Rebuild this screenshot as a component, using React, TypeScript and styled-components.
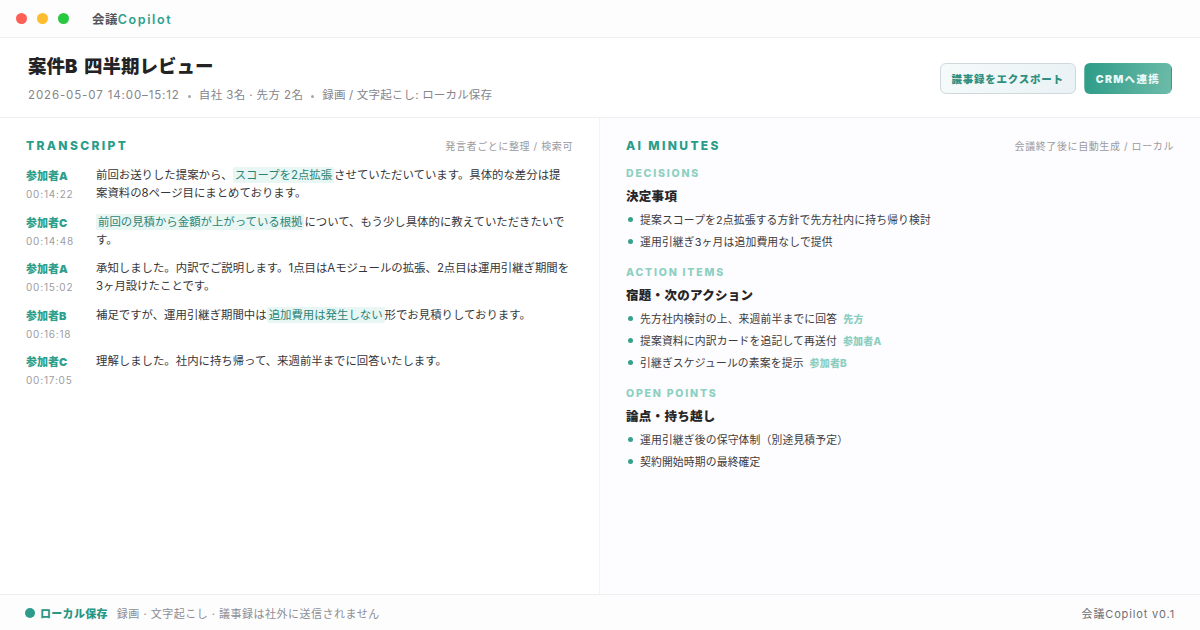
import React from 'react';
import styled, { createGlobalStyle } from 'styled-components';

const GlobalStyle = createGlobalStyle`
  html, body {
    margin: 0;
    padding: 0;
    background: #fff;
  }
  body {
    font-family: Inter, "Noto Sans CJK JP", sans-serif;
    color: #2a2a2e;
  }
  * { box-sizing: border-box; }
`;

const Page = styled.div`
  width: 1200px;
  height: 630px;
  display: flex;
  flex-direction: column;
  overflow: hidden;
  background: #fff;
`;

const TitleBar = styled.div`
  height: 38px;
  flex: none;
  display: flex;
  align-items: center;
  padding: 0 16px;
  background: #fdfdfe;
  border-bottom: 1px solid #f0f0f2;
`;

const Light = styled.span<{ $color: string }>`
  width: 11px;
  height: 11px;
  border-radius: 50%;
  margin-right: 10px;
  background: ${({ $color }) => $color};
`;

const Brand = styled.div`
  margin-left: 13px;
  font-size: 12.5px;
  font-weight: 600;
  color: #55555b;
  letter-spacing: 0.4px;
  span { color: #2fa08e; letter-spacing: 1.6px; }
`;

const Header = styled.header`
  height: 80px;
  flex: none;
  display: flex;
  align-items: center;
  justify-content: space-between;
  padding: 0 28px;
  border-bottom: 1px solid #eeeef0;
`;

const Title = styled.h1`
  margin: 0 0 7px;
  font-size: 18.5px;
  line-height: 28px;
  font-weight: 900;
  color: #232326;
  word-spacing: 3px;
`;

const Meta = styled.div`
  display: flex;
  align-items: center;
  font-size: 11.5px;
  line-height: 16px;
  color: #85858b;
  letter-spacing: 0.4px;
`;

const MetaDate = styled.span`
  letter-spacing: 0.88px;
`;

const MetaTail = styled.span`
  letter-spacing: 0.18px;
`;

const MetaDot = styled.span`
  width: 3px;
  height: 3px;
  margin: 2px 8px 0 8px;
  border-radius: 50%;
  background: #a5a5aa;
`;

const Actions = styled.div`
  display: flex;
  gap: 8px;
  margin-top: 1px;
`;

const Button = styled.div<{ $primary?: boolean }>`
  height: 31px;
  padding: 0 11px;
  display: flex;
  align-items: center;
  border-radius: 6px;
  font-size: 10.5px;
  font-weight: 900;
  letter-spacing: ${({ $primary }) => ($primary ? '1.3px' : '0.75px')};
  color: ${({ $primary }) => ($primary ? '#e9f6f3' : '#2f8f80')};
  background: ${({ $primary }) =>
    $primary ? 'linear-gradient(100deg, #2d9c88, #6dbba9)' : 'linear-gradient(100deg, #f5fafa, #eaf2f5)'};
  border: 1px solid ${({ $primary }) => ($primary ? 'transparent' : '#cfd9dc')};
`;

const Body = styled.main`
  flex: 1;
  min-height: 0;
  display: grid;
  grid-template-columns: 600px 600px;
`;

const Column = styled.section<{ $right?: boolean }>`
  padding: ${({ $right }) => ($right ? '18px 26px 0 26px' : '18px 27px 0 26px')};
  background: ${({ $right }) => ($right ? '#fdfcfe' : '#fff')};
  margin-left: ${({ $right }) => ($right ? '-1px' : '0')};
  border-left: ${({ $right }) => ($right ? '1px solid #f3f3f5' : 'none')};
`;

const ColumnHead = styled.div`
  display: flex;
  align-items: center;
  justify-content: space-between;
  height: 18px;
`;

const ColumnTitle = styled.h2`
  margin: 0;
  font-size: 12px;
  font-weight: 800;
  letter-spacing: 2.35px;
  color: #2a9c8a;
`;

const ColumnNote = styled.div`
  font-size: 10px;
  color: #9b9ba0;
  letter-spacing: 0.6px;
`;

const Entries = styled.div`
  display: flex;
  flex-direction: column;
  gap: 9.7px;
  margin-top: 12px;
`;

const Entry = styled.article`
  display: grid;
  grid-template-columns: 70px 1fr;
  min-height: 36.8px;
`;

const Speaker = styled.div`
  padding-top: 2px;
`;

const SpeakerName = styled.div`
  font-size: 11px;
  line-height: 16px;
  font-weight: 900;
  color: #2f9f8c;
`;

const Time = styled.div`
  margin-top: 3px;
  font-size: 10px;
  line-height: 14px;
  color: #9d9da2;
  letter-spacing: 0.8px;
`;

const Speech = styled.p`
  margin: 0;
  padding-right: 3px;
  font-size: 11.4px;
  line-height: 18.4px;
  color: #36363a;
`;

const Mark = styled.span`
  padding: 1px 2px;
  border-radius: 2px;
  background: #e8f6f4;
  color: #2b8577;
`;

const GroupLabel = styled.div<{ $first?: boolean }>`
  margin-top: ${({ $first }) => ($first ? '12px' : '13px')};
  font-size: 10.5px;
  line-height: 16px;
  font-weight: 800;
  letter-spacing: 1.8px;
  color: #8bd0c1;
`;

const GroupTitle = styled.h3`
  margin: 6px 0 2px;
  font-size: 12.5px;
  line-height: 18px;
  font-weight: 900;
  color: #262629;
  letter-spacing: 0.3px;
`;

const Items = styled.ul`
  list-style: none;
  margin: 0;
  padding: 0;
`;

const Item = styled.li`
  display: flex;
  align-items: center;
  height: 22px;
  font-size: 10.8px;
  color: #3b3b40;
  letter-spacing: 0.16px;
  &::before {
    content: '';
    width: 5px;
    height: 5px;
    margin: 1px 7px 0 2px;
    border-radius: 50%;
    background: #37a08f;
    flex: none;
  }
`;

const Owner = styled.span`
  margin-left: 6px;
  font-size: 10px;
  font-weight: 800;
  color: #8ccfc1;
`;

const Footer = styled.footer`
  height: 36px;
  flex: none;
  display: flex;
  align-items: center;
  padding: 0 25px;
  background: #fdfdfe;
  border-top: 1px solid #eeeef0;
  font-size: 11px;
  color: #8d8d93;
  letter-spacing: 0.5px;
`;

const StatusDot = styled.span`
  width: 10px;
  height: 10px;
  border-radius: 50%;
  background: #2f9c8b;
  margin-right: 5px;
`;

const Status = styled.span`
  font-weight: 900;
  color: #2b9684;
  margin-right: 9px;
  letter-spacing: 0.3px;
`;

const Version = styled.span`
  margin-left: auto;
  color: #6f6f75;
  letter-spacing: 0.85px;
`;

const transcript = [
  {
    name: '参加者A',
    time: '00:14:22',
    text: (
      <>
        前回お送りした提案から、<Mark>スコープを2点拡張</Mark>させていただいています。具体的な差分は提案資料の8ページ目にまとめております。
      </>
    ),
  },
  {
    name: '参加者C',
    time: '00:14:48',
    text: (
      <>
        <Mark>前回の見積から金額が上がっている根拠</Mark>について、もう少し具体的に教えていただきたいです。
      </>
    ),
  },
  {
    name: '参加者A',
    time: '00:15:02',
    text: <>承知しました。内訳でご説明します。1点目はAモジュールの拡張、2点目は運用引継ぎ期間を3ヶ月設けたことです。</>,
  },
  {
    name: '参加者B',
    time: '00:16:18',
    text: (
      <>
        補足ですが、運用引継ぎ期間中は<Mark>追加費用は発生しない</Mark>形でお見積りしております。
      </>
    ),
  },
  {
    name: '参加者C',
    time: '00:17:05',
    text: <>理解しました。社内に持ち帰って、来週前半までに回答いたします。</>,
  },
];

const minutes = [
  {
    label: 'DECISIONS',
    title: '決定事項',
    items: [{ text: '提案スコープを2点拡張する方針で先方社内に持ち帰り検討' }, { text: '運用引継ぎ3ヶ月は追加費用なしで提供' }],
  },
  {
    label: 'ACTION ITEMS',
    title: '宿題・次のアクション',
    items: [
      { text: '先方社内検討の上、来週前半までに回答', owner: '先方' },
      { text: '提案資料に内訳カードを追記して再送付', owner: '参加者A' },
      { text: '引継ぎスケジュールの素案を提示', owner: '参加者B' },
    ],
  },
  {
    label: 'OPEN POINTS',
    title: '論点・持ち越し',
    items: [{ text: '運用引継ぎ後の保守体制（別途見積予定）' }, { text: '契約開始時期の最終確定' }],
  },
];

export default function App() {
  return (
    <Page>
      <GlobalStyle />
      <TitleBar>
        <Light $color="#ff5f57" />
        <Light $color="#febc2e" />
        <Light $color="#28c840" />
        <Brand>
          会議<span>Copilot</span>
        </Brand>
      </TitleBar>
      <Header>
        <div>
          <Title>案件B 四半期レビュー</Title>
          <Meta>
            <MetaDate>2026-05-07 14:00–15:12</MetaDate>
            <MetaDot />
            自社 3名 · 先方 2名
            <MetaDot />
            <MetaTail>録画 / 文字起こし: ローカル保存</MetaTail>
          </Meta>
        </div>
        <Actions>
          <Button>議事録をエクスポート</Button>
          <Button $primary>CRMへ連携</Button>
        </Actions>
      </Header>
      <Body>
        <Column>
          <ColumnHead>
            <ColumnTitle>TRANSCRIPT</ColumnTitle>
            <ColumnNote>発言者ごとに整理 / 検索可</ColumnNote>
          </ColumnHead>
          <Entries>
            {transcript.map((entry) => (
              <Entry key={entry.time}>
                <Speaker>
                  <SpeakerName>{entry.name}</SpeakerName>
                  <Time>{entry.time}</Time>
                </Speaker>
                <Speech>{entry.text}</Speech>
              </Entry>
            ))}
          </Entries>
        </Column>
        <Column $right>
          <ColumnHead>
            <ColumnTitle>AI MINUTES</ColumnTitle>
            <ColumnNote>会議終了後に自動生成 / ローカル</ColumnNote>
          </ColumnHead>
          {minutes.map((group, index) => (
            <div key={group.label}>
              <GroupLabel $first={index === 0}>{group.label}</GroupLabel>
              <GroupTitle>{group.title}</GroupTitle>
              <Items>
                {group.items.map((item: { text: string; owner?: string }) => (
                  <Item key={item.text}>
                    {item.text}
                    {item.owner && <Owner>{item.owner}</Owner>}
                  </Item>
                ))}
              </Items>
            </div>
          ))}
        </Column>
      </Body>
      <Footer>
        <StatusDot />
        <Status>ローカル保存</Status>
        録画 · 文字起こし · 議事録は社外に送信されません
        <Version>会議Copilot v0.1</Version>
      </Footer>
    </Page>
  );
}
